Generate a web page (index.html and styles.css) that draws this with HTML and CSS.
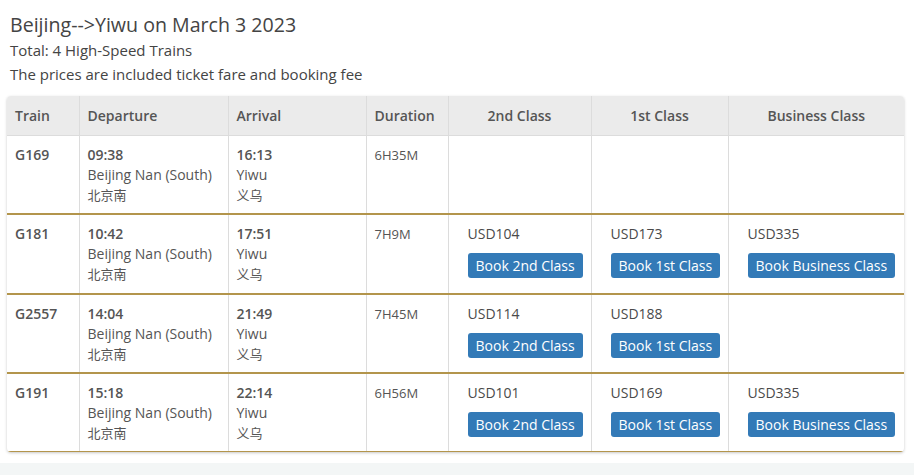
FILE: index.html
```html
<!DOCTYPE html>
<html>
<head>
<meta charset="utf-8">
<link rel="stylesheet" href="styles.css">
</head>
<body>
<div class="page">
  <h1 class="title">Beijing--&gt;Yiwu on March 3 2023</h1>
  <p class="info">Total: 4 High-Speed Trains</p>
  <p class="info">The prices are included ticket fare and booking fee</p>
  <div class="card">
    <table class="trains">
      <colgroup>
        <col class="c-train"><col class="c-dep"><col class="c-arr"><col class="c-dur"><col class="c-2nd"><col class="c-1st"><col class="c-bus">
      </colgroup>
      <thead>
        <tr>
          <th>Train</th><th>Departure</th><th>Arrival</th><th>Duration</th>
          <th class="center">2nd Class</th><th class="center">1st Class</th><th class="center">Business Class</th>
        </tr>
      </thead>
      <tbody>
        <tr>
          <td class="num">G169</td>
          <td><div class="time">09:38</div><div>Beijing Nan (South)</div><div class="cn">北京南</div></td>
          <td><div class="time">16:13</div><div>Yiwu</div><div class="cn">义乌</div></td>
          <td class="dur">6H35M</td>
          <td class="price"></td><td class="price"></td><td class="price"></td>
        </tr>
        <tr>
          <td class="num">G181</td>
          <td><div class="time">10:42</div><div>Beijing Nan (South)</div><div class="cn">北京南</div></td>
          <td><div class="time">17:51</div><div>Yiwu</div><div class="cn">义乌</div></td>
          <td class="dur">7H9M</td>
          <td class="price"><div>USD104</div><button class="btn">Book 2nd Class</button></td>
          <td class="price"><div>USD173</div><button class="btn">Book 1st Class</button></td>
          <td class="price"><div>USD335</div><button class="btn">Book Business Class</button></td>
        </tr>
        <tr>
          <td class="num">G2557</td>
          <td><div class="time">14:04</div><div>Beijing Nan (South)</div><div class="cn">北京南</div></td>
          <td><div class="time">21:49</div><div>Yiwu</div><div class="cn">义乌</div></td>
          <td class="dur">7H45M</td>
          <td class="price"><div>USD114</div><button class="btn">Book 2nd Class</button></td>
          <td class="price"><div>USD188</div><button class="btn">Book 1st Class</button></td>
          <td class="price"></td>
        </tr>
        <tr>
          <td class="num">G191</td>
          <td><div class="time">15:18</div><div>Beijing Nan (South)</div><div class="cn">北京南</div></td>
          <td><div class="time">22:14</div><div>Yiwu</div><div class="cn">义乌</div></td>
          <td class="dur">6H56M</td>
          <td class="price"><div>USD101</div><button class="btn">Book 2nd Class</button></td>
          <td class="price"><div>USD169</div><button class="btn">Book 1st Class</button></td>
          <td class="price"><div>USD335</div><button class="btn">Book Business Class</button></td>
        </tr>
      </tbody>
    </table>
  </div>
</div>
<div class="footer"></div>
</body>
</html>
```

FILE: styles.css
```css
html, body {
  margin: 0;
  padding: 0;
  background: #fff;
}
body {
  font-family: "Open Sans", "Noto Sans CJK SC", sans-serif;
  color: #555;
}
.page {
  padding: 12px 10px 0 7px;
}
.title {
  margin: 0 0 0 3px;
  font-size: 19.6px;
  line-height: 26px;
  font-weight: 400;
  color: #444;
}
.info {
  margin: 0 0 0 3px;
  font-size: 15px;
  line-height: 24px;
  color: #444;
}
.card {
  margin-top: 10px;
  width: 897px;
  background: #fff;
  border-radius: 4px;
  box-shadow: 0 1px 3px rgba(0, 0, 0, 0.22);
  overflow: hidden;
}
.trains {
  width: 100%;
  border-collapse: collapse;
  table-layout: fixed;
  font-size: 14px;
  line-height: 20px;
}
.c-train { width: 72px; }
.c-dep { width: 149px; }
.c-arr { width: 138px; }
.c-dur { width: 82px; }
.c-2nd { width: 143px; }
.c-1st { width: 137px; }
.c-bus { width: 176px; }
.trains th {
  background: #ebebeb;
  text-align: left;
  font-weight: 600;
  color: #555;
  height: 39px;
  padding: 0 8px;
  border-left: 1px solid #dcdcdc;
  border-bottom: 1px solid #dcdcdc;
}
.trains th:first-child,
.trains td:first-child {
  border-left: none;
}
.trains th.center {
  text-align: center;
}
.trains td {
  vertical-align: top;
  padding: 9px 8px 8px;
  border-left: 1px solid #dcdcdc;
  border-bottom: 2px solid #b3954c;
  height: 60px;
}
.trains tbody tr:nth-child(2) td {
  padding-bottom: 9px;
}
.trains tbody tr:last-child td {
  border-bottom: 1px solid #b3954c;
}
.num {
  font-weight: 600;
}
.time {
  font-weight: 600;
}
.cn {
  font-family: "Noto Sans CJK SC", sans-serif;
  font-size: 13px;
}
.dur {
  font-size: 13px;
}
.trains td.price {
  padding-left: 19px;
  color: #4a4a4a;
}
.btn {
  display: inline-block;
  margin-top: 9px;
  padding: 2px 8px;
  font-family: "Open Sans", sans-serif;
  font-size: 14px;
  line-height: 21px;
  white-space: nowrap;
  color: #fff;
  background: #337ab7;
  border: none;
  border-radius: 3px;
}
.footer {
  margin-top: 11px;
  height: 20px;
  background: #f3f6f6;
}
```
